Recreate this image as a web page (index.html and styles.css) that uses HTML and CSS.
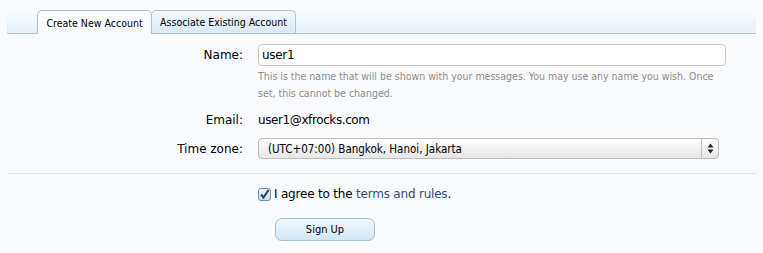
FILE: index.html
```html
<!DOCTYPE html>
<html>
<head>
<meta charset="utf-8">
<link rel="stylesheet" href="styles.css">
</head>
<body>
<div class="tabs">
  <div class="tab active">Create New Account</div>
  <div class="tab">Associate Existing Account</div>
</div>
<form class="form">
  <div class="row row-name">
    <label class="label">Name:</label>
    <div class="field">
      <div class="textbox">user1</div>
      <p class="hint">This is the name that will be shown with your messages. You may use any name you wish. Once set, this cannot be changed.</p>
    </div>
  </div>
  <div class="row row-email">
    <label class="label">Email:</label>
    <div class="field value">user1@xfrocks.com</div>
  </div>
  <div class="row row-tz">
    <label class="label">Time zone:</label>
    <div class="field">
      <div class="select">
        <span>(UTC+07:00) Bangkok, Hanoi, Jakarta</span>
        <span class="arrows"><svg width="7" height="11" viewBox="0 0 7 11"><path d="M3.5 0.5 L6.5 4.5 L0.5 4.5 Z M3.5 10.5 L6.5 6.5 L0.5 6.5 Z" fill="#222"/></svg></span>
      </div>
    </div>
  </div>
  <div class="divider"></div>
  <div class="row row-agree">
    <div></div>
    <div class="field agree">
      <span class="check"><svg width="13" height="13" viewBox="0 0 13 13"><path d="M3 6.5 L5.5 9.5 L10.5 2" fill="none" stroke="#1f3f6b" stroke-width="2"/></svg></span>
      <span>I agree to the <a class="link">terms and rules</a>.</span>
    </div>
  </div>
  <div class="row row-submit">
    <div></div>
    <div class="field"><button type="button" class="button">Sign Up</button></div>
  </div>
</form>
</body>
</html>
```
FILE: styles.css
```css
html, body {
  margin: 0;
  padding: 0;
  background: #fafbfd;
  font-family: "DejaVu Sans", Verdana, sans-serif;
  font-size: 12px;
  color: #000;
}
.tabs {
  margin: 10px 7px 0 7px;
  padding-left: 30px;
  display: flex;
  align-items: flex-end;
  height: 23px;
  border-bottom: 1px solid #a9c4d8;
  background: linear-gradient(to bottom, #fafcfe, #e4eff8);
}
.tab {
  height: 23px;
  box-sizing: border-box;
  padding: 0 8px;
  display: flex;
  align-items: center;
  font-family: "DejaVu Sans Condensed", "DejaVu Sans", sans-serif;
  font-size: 10.5px;
  color: #000;
  border: 1px solid #a9c4d8;
  border-bottom: none;
  border-radius: 5px 5px 0 0;
  background: linear-gradient(to bottom, #f2f8fd, #dbe9f5);
  margin-right: -1px;
}
.tab.active {
  background: #fbfcfe;
  height: 24px;
  padding: 0 8.5px;
  margin-bottom: -1px;
  position: relative;
  z-index: 1;
}
.form {
  margin: 10px 7px 0 7px;
}
.row {
  display: grid;
  grid-template-columns: 236px 1fr;
  column-gap: 15px;
}
.label {
  text-align: right;
  line-height: 22px;
  font-size: 12px;
}
.textbox {
  width: 468px;
  height: 22px;
  box-sizing: border-box;
  border: 1px solid #c8c8c8;
  border-radius: 4px;
  background: #fff;
  padding: 0 3px;
  line-height: 20px;
  letter-spacing: -0.3px;
}
.hint {
  margin: 2px 0 0 0;
  font-family: "DejaVu Sans Condensed", "DejaVu Sans", sans-serif;
  font-size: 10.5px;
  line-height: 17px;
  color: #8c8c8c;
  width: 470px;
}
.row-email {
  margin-top: 7px;
}
.value {
  line-height: 22px;
  letter-spacing: -0.4px;
}
.row-tz {
  margin-top: 7px;
}
.select {
  width: 461px;
  height: 21px;
  box-sizing: border-box;
  border: 1px solid #bdbdbd;
  border-radius: 4px;
  background: linear-gradient(to bottom, #fdfdfd, #e6e6e6);
  display: flex;
  align-items: center;
  justify-content: space-between;
  padding: 0 0 0 9px;
  font-family: "DejaVu Sans Condensed", "DejaVu Sans", sans-serif;
  font-size: 11.5px;
}
.arrows {
  width: 16px;
  height: 19px;
  border-left: 1px solid #c4c4c4;
  display: flex;
  align-items: center;
  justify-content: center;
}
.divider {
  height: 1px;
  background: #d7e6ed;
  margin: 13px 0 12px 0;
}
.agree {
  display: flex;
  align-items: center;
  line-height: 16px;
  font-size: 12px;
  letter-spacing: -0.2px;
}
.check {
  width: 13px;
  height: 13px;
  box-sizing: border-box;
  border: 1px solid #6f8dab;
  border-radius: 3px;
  background: linear-gradient(to bottom, #eef4fb, #c9dbee);
  margin-right: 3px;
  display: flex;
}
.check svg { display: block; margin: -1px; }
.link {
  color: #2c4d78;
}
.row-submit {
  margin-top: 16px;
}
.button {
  margin-left: 17px;
  width: 100px;
  height: 23px;
  box-sizing: border-box;
  border: 1px solid #a4c0d6;
  border-radius: 7px;
  background: linear-gradient(to bottom, #f2f8fd, #d3e5f3);
  font-family: "DejaVu Sans Condensed", "DejaVu Sans", sans-serif;
  font-size: 11px;
  color: #000;
  padding: 0;
  box-shadow: 0 1px 1px rgba(0,0,0,0.08);
}
```
